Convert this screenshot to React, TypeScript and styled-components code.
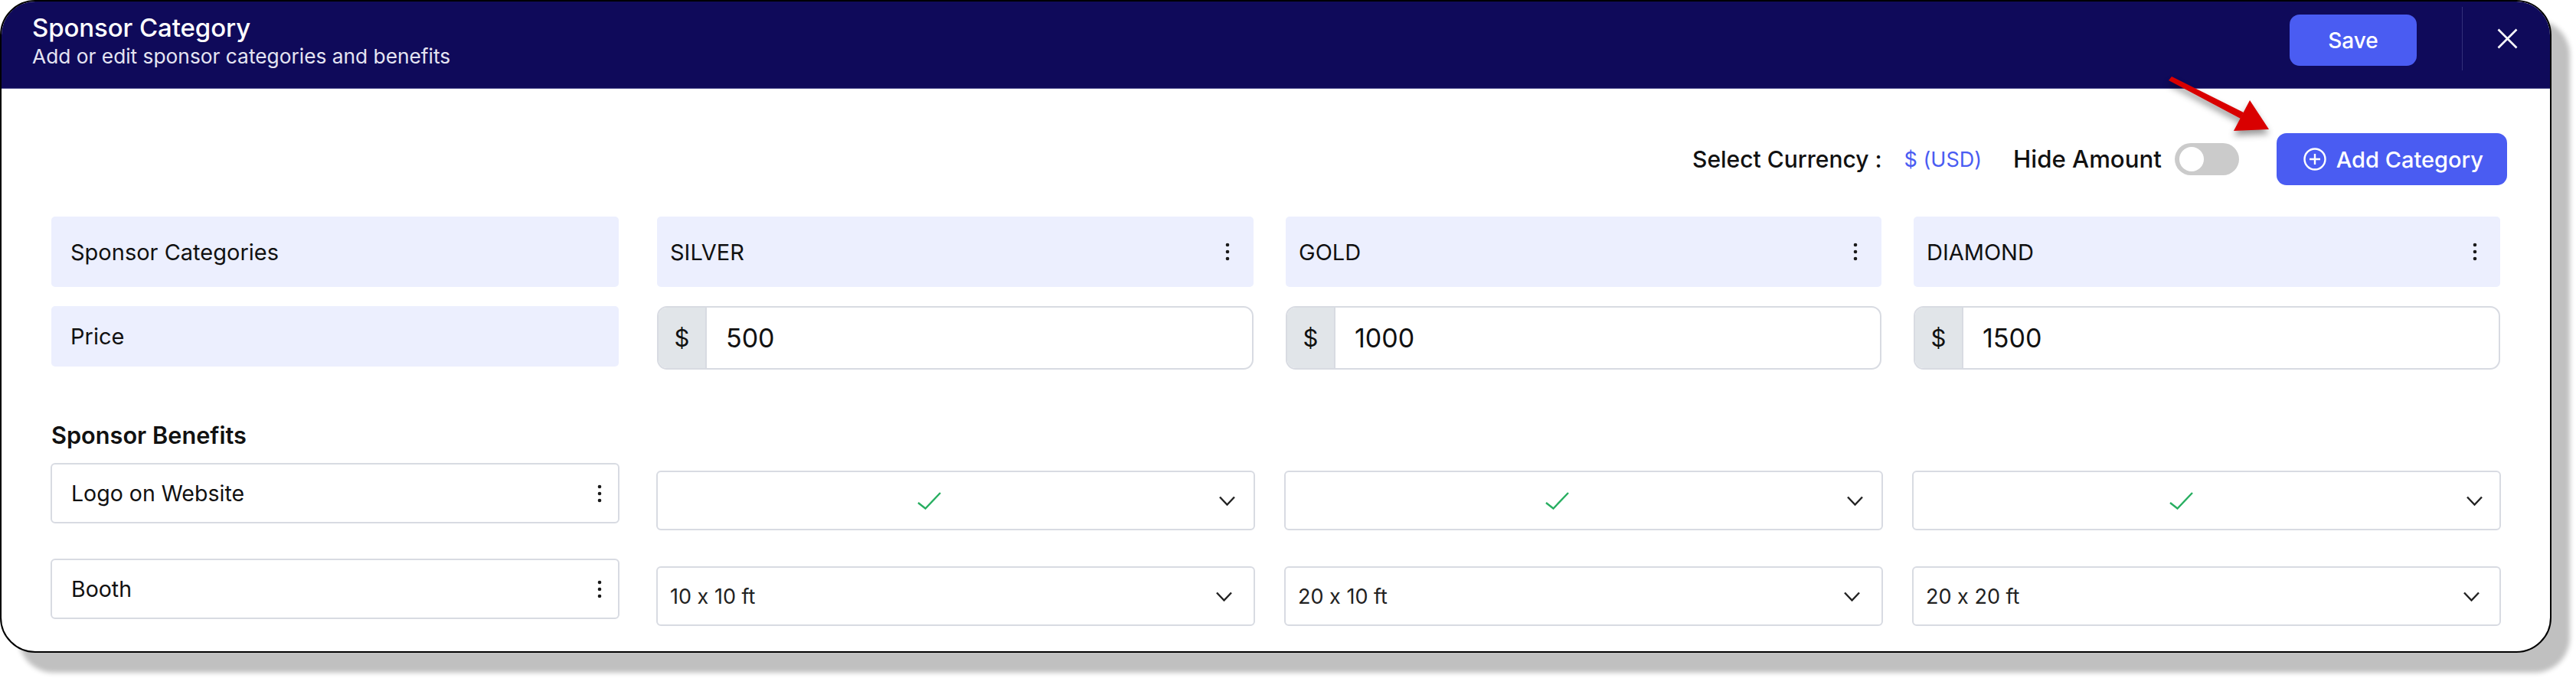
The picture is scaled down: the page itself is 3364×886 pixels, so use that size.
import React from 'react';
import styled, { createGlobalStyle } from 'styled-components';

const GlobalStyle = createGlobalStyle`
  html, body {
    margin: 0;
    padding: 0;
    background: #fff;
    overflow: hidden;
  }
  * { box-sizing: border-box; }
`;

const Page = styled.div`
  position: relative;
  width: 3364px;
  height: 886px;
  font-family: 'Inter', 'Liberation Sans', sans-serif;
  font-feature-settings: 'calt' 0;
  color: #111;
`;

const Card = styled.div`
  width: 3332px;
  height: 853px;
  border: 2px solid #000;
  border-radius: 46px;
  background: #fff;
  overflow: hidden;
  box-shadow: 24px 26px 6px #c0c0c0;
`;

// Top bar
const Header = styled.header`
  height: 114px;
  background: #0f0a5a;
  border-bottom: 1px solid #4b4a8c;
  display: flex;
  align-items: center;
  padding-left: 40px;
`;

const TitleBlock = styled.div`
  flex: 1;
  display: flex;
  flex-direction: column;
  gap: 2px;
  color: #fff;
  margin-top: -10px;
`;

const Title = styled.div`
  font-size: 33px;
  line-height: 38px;
  font-weight: 500;
  letter-spacing: -0.1px;
`;

const Subtitle = styled.div`
  font-size: 26.3px;
  line-height: 34px;
  color: #e4e4f2;
`;

const SaveButton = styled.button`
  width: 166px;
  height: 67px;
  margin-top: -12px;
  border: none;
  border-radius: 13px;
  background: #4a5cf2;
  color: #fff;
  font: 500 28px 'Inter', sans-serif;
`;

const Divider = styled.div`
  width: 1px;
  height: 83px;
  margin: -16px 0 0 59px;
  background: #33307a;
`;

const CloseButton = styled.div`
  display: flex;
  margin: -16px 42px 0 45px;
`;

// Toolbar
const Content = styled.div`
  padding: 58px 0 0 65px;
`;

const Toolbar = styled.div`
  display: flex;
  align-items: center;
  height: 68px;
  padding-left: 2143px;
`;

const ToolbarLabel = styled.span<{ $size: number }>`
  font-size: ${p => p.$size}px;
  font-weight: 500;
  white-space: nowrap;
`;

const CurrencyValue = styled.span`
  margin: 0 41px 0 29px;
  font-size: 27px;
  color: #4a5cf2;
  white-space: nowrap;
`;

const Toggle = styled.div`
  width: 84px;
  height: 42px;
  margin: 0 49px 0 17px;
  padding: 5px 6px;
  border-radius: 21px;
  background: #cbcbcb;
`;

const ToggleKnob = styled.div`
  width: 32px;
  height: 32px;
  border-radius: 50%;
  background: #fff;
`;

const AddButton = styled.button`
  width: 301px;
  height: 68px;
  display: flex;
  align-items: center;
  justify-content: center;
  gap: 13px;
  padding: 0 0 0 4px;
  border: none;
  border-radius: 13px;
  background: #4a5cf2;
  color: #fff;
  font: 500 29px 'Inter', sans-serif;
  white-space: nowrap;
`;

// Category grid
const CategoryRow = styled.div<{ $top: number; $height: number }>`
  display: grid;
  grid-template-columns: 749px 779px 778px 766px;
  column-gap: 42px;
  align-items: start;
  margin-top: ${p => p.$top}px;
  height: ${p => p.$height}px;
`;

const RowLabel = styled.div<{ $height: number }>`
  width: 741px;
  height: ${p => p.$height}px;
  display: flex;
  align-items: center;
  padding-left: 25px;
  border-radius: 5px;
  background: #eceffe;
  font-size: 29px;
`;

const CategoryCell = styled.div`
  height: 92px;
  display: flex;
  align-items: center;
  justify-content: space-between;
  padding: 0 31px 0 17px;
  border-radius: 5px;
  background: #eceffe;
  font-size: 29px;

  &:last-child {
    padding-right: 30px;
  }
`;

const PriceField = styled.div`
  height: 83px;
  display: flex;
  border: 2px solid #d8dbe2;
  border-radius: 13px;
  overflow: hidden;
`;

const PricePrefix = styled.div`
  width: 63px;
  display: flex;
  align-items: center;
  justify-content: center;
  background: #e1e5e9;
  border-right: 2px solid #d8dbe2;
  font-size: 31px;
`;

const PriceValue = styled.div`
  display: flex;
  align-items: center;
  padding-left: 25px;
  font-size: 34px;
`;

// Benefits
const SectionTitle = styled.div`
  margin-top: 68px;
  font-size: 30.7px;
  line-height: 36px;
  font-weight: 600;
`;

const BenefitRow = styled.div<{ $top: number }>`
  display: grid;
  grid-template-columns: 753px 782px 782px 769px;
  column-gap: 38px;
  align-items: start;
  height: 88px;
  margin: ${p => p.$top}px 0 0 -1px;
`;

const BenefitLabel = styled.div`
  width: 743px;
  height: 79px;
  display: flex;
  align-items: center;
  justify-content: space-between;
  padding: 0 21px 0 25px;
  border: 2px solid #d8dbe2;
  border-radius: 6px;
  font-size: 28.5px;
`;

const SelectBox = styled.div<{ $inset: number }>`
  height: 78px;
  margin-top: 10px;
  display: flex;
  align-items: center;
  padding: 0 ${p => p.$inset}px 0 16px;
  border: 2px solid #d8dbe2;
  border-radius: 6px;
  font-size: 27px;
  color: #222;
`;

const SelectValue = styled.div<{ $centered?: boolean }>`
  flex: 1;
  display: flex;
  justify-content: ${p => (p.$centered ? 'center' : 'flex-start')};
  margin-right: ${p => (p.$centered ? '18px' : '0')};
`;

const ArrowOverlay = styled.svg`
  position: absolute;
  left: 2820px;
  top: 95px;
  filter: drop-shadow(0 6px 4px rgba(0, 0, 0, 0.4));
`;

const DotsIcon = () => (
  <svg width="6" height="24" viewBox="0 0 6 24">
    <circle cx="3" cy="3" r="2.3" fill="#1a1a1a" />
    <circle cx="3" cy="12" r="2.3" fill="#1a1a1a" />
    <circle cx="3" cy="21" r="2.3" fill="#1a1a1a" />
  </svg>
);

const ChevronIcon = () => (
  <svg width="21" height="13" viewBox="0 0 21 13" fill="none" style={{ marginLeft: 22 }}>
    <path d="M1 1.5l9.5 10 9.5-10" stroke="#222" strokeWidth="2.4" />
  </svg>
);

const CheckIcon = () => (
  <svg width="31" height="23" viewBox="0 0 31 23" fill="none">
    <path d="M1 14l9.5 7.5L30 1" stroke="#27ae60" strokeWidth="2.4" />
  </svg>
);

const CloseIcon = () => (
  <svg width="27" height="27" viewBox="0 0 27 27" fill="none">
    <path d="M1.5 1.5l24 24M25.5 1.5l-24 24" stroke="#fff" strokeWidth="2.6" />
  </svg>
);

const PlusCircleIcon = () => (
  <svg width="30" height="30" viewBox="0 0 30 30" fill="none">
    <circle cx="15" cy="15" r="13.5" stroke="#fff" strokeWidth="2.4" />
    <path d="M15 8v14M8 15h14" stroke="#fff" strokeWidth="2.4" />
  </svg>
);

const categories = [
  { name: 'SILVER', price: '500' },
  { name: 'GOLD', price: '1000' },
  { name: 'DIAMOND', price: '1500' }
];

const booths = ['10 x 10 ft', '20 x 10 ft', '20 x 20 ft'];

export default function App() {
  return (
    <Page>
      <GlobalStyle />
      <Card>
        <Header>
          <TitleBlock>
            <Title>Sponsor Category</Title>
            <Subtitle>Add or edit sponsor categories and benefits</Subtitle>
          </TitleBlock>
          <SaveButton>Save</SaveButton>
          <Divider />
          <CloseButton>
            <CloseIcon />
          </CloseButton>
        </Header>

        <Content>
          <Toolbar>
            <ToolbarLabel $size={30}>Select Currency :</ToolbarLabel>
            <CurrencyValue>$ (USD)</CurrencyValue>
            <ToolbarLabel $size={31.2}>Hide Amount</ToolbarLabel>
            <Toggle>
              <ToggleKnob />
            </Toggle>
            <AddButton>
              <PlusCircleIcon />
              Add Category
            </AddButton>
          </Toolbar>

          <CategoryRow $top={41} $height={92}>
            <RowLabel $height={92}>Sponsor Categories</RowLabel>
            {categories.map(c => (
              <CategoryCell key={c.name}>
                {c.name}
                <DotsIcon />
              </CategoryCell>
            ))}
          </CategoryRow>

          <CategoryRow $top={25} $height={83}>
            <RowLabel $height={79}>Price</RowLabel>
            {categories.map(c => (
              <PriceField key={c.name}>
                <PricePrefix>$</PricePrefix>
                <PriceValue>{c.price}</PriceValue>
              </PriceField>
            ))}
          </CategoryRow>

          <SectionTitle>Sponsor Benefits</SectionTitle>

          <BenefitRow $top={18}>
            <BenefitLabel>
              Logo on Website
              <DotsIcon />
            </BenefitLabel>
            {categories.map((c, i) => (
              <SelectBox key={c.name} $inset={i === 2 ? 22 : 24}>
                <SelectValue $centered>
                  <CheckIcon />
                </SelectValue>
                <ChevronIcon />
              </SelectBox>
            ))}
          </BenefitRow>

          <BenefitRow $top={37}>
            <BenefitLabel>
              Booth
              <DotsIcon />
            </BenefitLabel>
            {booths.map((b, i) => (
              <SelectBox key={b} $inset={i === 2 ? 26 : 28}>
                <SelectValue>{b}</SelectValue>
                <ChevronIcon />
              </SelectBox>
            ))}
          </BenefitRow>
        </Content>
      </Card>

      <ArrowOverlay width="160" height="95" viewBox="0 0 160 95">
        <path d="M12 10l4-5 94 47-4 8z" fill="#d90000" />
        <path d="M118 36l25 38-46 2z" fill="#d90000" />
      </ArrowOverlay>
    </Page>
  );
}
